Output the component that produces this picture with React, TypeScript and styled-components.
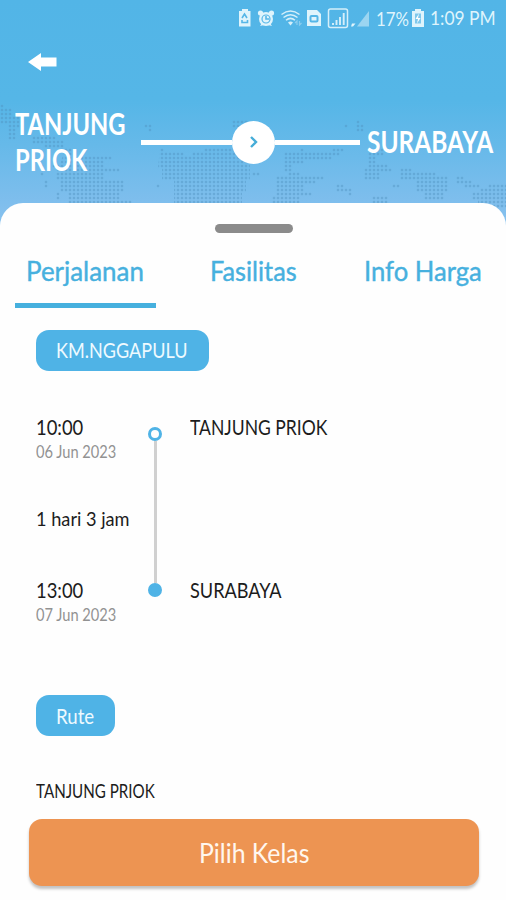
import React from "react";
import styled, { createGlobalStyle } from "styled-components";

const BLUE = "#4fb3e6";

const GlobalStyle = createGlobalStyle`
  * { box-sizing: border-box; }
  body { margin: 0; background: #fefefe; font-family: Lato, "Open Sans", sans-serif; }
  button { font-family: inherit; }
`;

const Screen = styled.main`
  width: 506px;
  height: 900px;
  display: flex;
  flex-direction: column;
  overflow: hidden;
  background: #fefefe;
`;

/* Condensed label: the box keeps the final width, the glyphs are narrowed inside it. */
const LabelBox = styled.span<{ $w: number; $h: number }>`
  display: block;
  flex: none;
  width: ${(p) => p.$w}px;
  height: ${(p) => p.$h}px;
  text-align: left;
`;

const LabelText = styled.span<{
  $size: number;
  $lead: number;
  $scale: number;
  $color: string;
  $weight: number;
  $stroke: number;
}>`
  display: block;
  width: max-content;
  font-size: ${(p) => p.$size}px;
  line-height: ${(p) => p.$lead}px;
  font-weight: ${(p) => p.$weight};
  color: ${(p) => p.$color};
  -webkit-text-stroke: ${(p) => p.$stroke}px ${(p) => p.$color};
  white-space: nowrap;
  transform: scaleX(${(p) => p.$scale});
  transform-origin: 0 50%;
`;

type LabelProps = {
  children: string;
  w: number;
  h: number;
  size: number;
  scale: number;
  lead?: number;
  color?: string;
  weight?: number;
  stroke?: number;
};

function Label({ children, w, h, size, scale, lead = h, color = "#1c1c1c", weight = 400, stroke = 0 }: LabelProps) {
  return (
    <LabelBox $w={w} $h={h}>
      <LabelText $size={size} $lead={lead} $scale={scale} $color={color} $weight={weight} $stroke={stroke}>
        {children}
      </LabelText>
    </LabelBox>
  );
}

const Header = styled.header`
  position: relative;
  flex: none;
  height: 230px;
  background: linear-gradient(#52b5e7 0, #55b6e7 100px, #66b9e9 145px, #7fbeed 203px, #8ac3ef 230px);
`;

const WorldMap = styled.svg`
  position: absolute;
  inset: 0;
`;

const HeaderContent = styled.div`
  position: relative;
  display: flex;
  flex-direction: column;
`;

const StatusBar = styled.div`
  display: flex;
  align-items: center;
  height: 36px;
  padding-left: 238px;
`;

const StatusIcons = styled.svg`
  flex: none;
  margin-right: 7px;
`;

const ClockSlot = styled.div`
  display: flex;
  align-items: center;
  gap: 6px;
  margin-left: 4px;
`;

const BackButton = styled.button`
  display: flex;
  width: 30px;
  height: 20px;
  margin: 16px 0 0 28px;
  padding: 0;
  border: 0;
  background: none;
`;

const RouteBar = styled.div`
  display: flex;
  align-items: center;
  height: 74px;
  margin-top: 33px;
  padding-left: 15px;
`;

const Origin = styled.div`
  display: flex;
  flex-direction: column;
  width: 126px;
`;

const Connector = styled.div`
  display: flex;
  align-items: center;
  width: 219px;
  margin-right: 7px;
`;

const Rule = styled.span<{ $w: number }>`
  width: ${(p) => p.$w}px;
  height: 5px;
  background: #fff;
`;

const Circle = styled.span`
  display: flex;
  align-items: center;
  justify-content: center;
  width: 43px;
  height: 43px;
  border-radius: 50%;
  background: #fff;
`;

const Sheet = styled.section`
  position: relative;
  flex: 1;
  display: flex;
  flex-direction: column;
  margin-top: -27px;
  border-radius: 23px 23px 0 0;
  background: #fefefe;
`;

const Handle = styled.div`
  width: 78px;
  height: 9px;
  margin: 21px 0 0 215px;
  border-radius: 5px;
  background: #8b8b8b;
`;

const Tabs = styled.nav`
  display: flex;
  justify-content: space-between;
  padding: 0 12px 0 14.5px;
  margin-top: 21px;
`;

const Tab = styled.div<{ $active?: boolean }>`
  display: flex;
  justify-content: center;
  width: 141px;
  height: 54px;
  border-bottom: 5px solid ${(p) => (p.$active ? "#46b0de" : "transparent")};
`;

const Chip = styled.div<{ $w: number; $top: number }>`
  display: flex;
  align-items: center;
  width: ${(p) => p.$w}px;
  height: 41px;
  margin: ${(p) => p.$top}px 0 0 36px;
  padding-left: 20px;
  border-radius: 13px;
  background: ${BLUE};
`;

const Journey = styled.div`
  display: grid;
  grid-template-columns: 111px 43px 1fr;
  height: 210px;
  margin: 44px 0 0 36px;
`;

const Times = styled.div`
  display: flex;
  flex-direction: column;
  justify-content: space-between;
`;

const Stop = styled.div`
  display: flex;
  flex-direction: column;
`;

const Track = styled.div`
  display: flex;
  flex-direction: column;
  align-items: center;
  width: 16px;
  height: 170px;
  margin-top: 12px;
`;

const Dot = styled.span<{ $filled?: boolean }>`
  width: 14px;
  height: 14px;
  border: 3px solid ${BLUE};
  border-radius: 50%;
  background: ${(p) => (p.$filled ? BLUE : "#fefefe")};
`;

const TrackLine = styled.span`
  flex: 1;
  width: 3px;
  background: #d0d0d0;
`;

const Ports = styled.div`
  display: flex;
  flex-direction: column;
  justify-content: space-between;
  height: 189px;
`;

const RouteItem = styled.div`
  margin: 43px 0 0 36px;
`;

const SelectButton = styled.button`
  display: flex;
  align-items: center;
  justify-content: center;
  flex: none;
  width: 450px;
  height: 67px;
  margin: 16px 0 0 29px;
  padding: 0;
  border: 0;
  border-radius: 13px;
  background: #ed9452;
  box-shadow: 0 3px 3px rgba(0, 0, 0, 0.24);
`;

const LAND =
  "M0 104h4v4h8v8h12v12h-8v12h-8v-16h-8z M32 136h24v4h8v8h8v4h-12v-4h-16v-4h-12z" +
  "M40 164h4v16h4v8h-4v-12h-4z M56 192h4v8h-4z" +
  "M64 152h8v8h8v-4h32v4h-8v8h16v4h-16v8h20v12h-4v8h12v8h-64v-16h-8v-12h-4v-12h-4v-4h8z" +
  "M144 124h8v8h-4v-4h-4z M156 184h4v4h-4z M160 148h4v4h20v4h8v-4h12v-4h46v32h-4v12h-4v16h-68v-28h-12v-12h-4z" +
  "M232 120h16v8h-16z M252 172h8v4h-8z" +
  "M284 160v-8h16v-4h4v4h28v-4h12v4h-4v4h-8v4h-28v4h-12v8h-8z" +
  "M276 176h12v-4h12v4h24v4h-8v4h-12v8h8v4h-12v8h-28v-8h4z" +
  "M336 184h8v4h8v8h-4v-4h-12z M344 124h4v4h-4z M356 120h4v4h4v8h-8z" +
  "M368 148h16v8h-8v8h12v4h4v4h-12v8h-16v-12h4z M372 196h16v8h-16z M392 184h8v4h-8z" +
  "M400 168h12v4h24v4h12v16h-4v8h-20v-8h-8v-12h-16z M456 176h8v4h8v4h8v4h-16v-4h-8z M472 192h8v-4h8v-4h18v24h-28v-8h-6z";

export default function App() {
  return (
    <>
      <GlobalStyle />
      <Screen>
        <Header>
          <WorldMap width="506" height="230" viewBox="0 0 506 230">
            <defs>
              <pattern id="dots" width="4" height="4" patternUnits="userSpaceOnUse">
                <path d="M2 0v4M0 2h4" stroke="#4a8fbd" strokeOpacity="0.15" strokeWidth="1" />
                <circle cx="2" cy="2" r="1" fill="#4a8fbd" fillOpacity="0.42" />
              </pattern>
            </defs>
            <path d={LAND} fill="url(#dots)" />
          </WorldMap>
          <HeaderContent>
            <StatusBar>
              <StatusIcons width="131" height="22" viewBox="238 7 131 22" fill="none">
                <g fill="#dff4fc">
                  <path d="M242 9h6v2h2.500v15.500h-11.500v-15.500h3z" />
                  <circle cx="266" cy="19" r="7" />
                  <circle cx="260.500" cy="13" r="2.600" />
                  <circle cx="271.500" cy="13" r="2.600" />
                  <path d="M260 26l2-3 2 2zM272 26l-2-3-2 2z" />
                  <path d="M307 10h10l4 4v12h-14z" />
                  <path d="M352 23.500h3.500l-2.500 3h-2z" />
                </g>
                <path d="M369 11v15.500h-12z" fill="#9bd5f1" />
                <g stroke="#55b6e7" strokeWidth="1.600">
                  <path d="M242 18l2.500-4 2.500 4M242 20v2.500h5.500V20" />
                  <circle cx="266" cy="19" r="4" strokeWidth="1.200" />
                  <path d="M266 16v3h3" />
                  <rect x="310.500" y="16" width="7" height="5.500" rx="1" strokeWidth="2" />
                </g>
                <g stroke="#d5effa" strokeWidth="1.500">
                  <path d="M281.500 14.500q9-7 18 0M283.500 17.500q7-5.500 14 0M286 20.300q4.500-3.800 9 0" />
                  <path d="M288 22.500q2.500-2 5 0l-2.500 3z" fill="#d5effa" stroke="none" />
                  <path d="M295 23l2-2v4M299.500 21v4l2-2" stroke="#8bcdef" strokeWidth="1.200" />
                  <rect x="328.500" y="9" width="19" height="18.500" rx="2" strokeWidth="1.500" />
                  <path d="M333 25v-2M336.500 25v-5M340 25v-8M343.700 25V13" strokeWidth="1.900" />
                </g>
              </StatusIcons>
              <Label w={32} h={24} size={20} scale={0.84} color="#dff4fc">17%</Label>
              <ClockSlot>
                <svg width="12" height="18" viewBox="0 0 12 18">
                  <path d="M3 0h6v2h3v16H0V2h3z" fill="#dff4fc" />
                  <path d="M3 4.500h6v10H3z" fill="#7fc8ec" />
                  <path d="M7 4.500L3.500 10H6l-1 4.500L8.500 9H6z" fill="#fff" />
                </svg>
                <Label w={66} h={24} lead={22} size={20} scale={0.87} color="#dff4fc">1:09 PM</Label>
              </ClockSlot>
            </StatusBar>
            <BackButton aria-label="Kembali">
              <svg width="30" height="20" viewBox="0 0 30 20">
                <path d="M0 10L13 1v4.500h15.500v9H13V19z" fill="#fff" />
              </svg>
            </BackButton>
            <RouteBar>
              <Origin>
                <Label w={112} h={36} lead={34} size={30} scale={0.79} color="#fff" weight={700}>TANJUNG</Label>
                <Label w={112} h={36} lead={35} size={30} scale={0.79} color="#fff" weight={700}>PRIOK</Label>
              </Origin>
              <Connector>
                <Rule $w={91} />
                <Circle>
                  <svg width="10" height="14" viewBox="0 0 10 14">
                    <path d="M2 2l5 5-5 5" fill="none" stroke="#46add8" strokeWidth="2.400" />
                  </svg>
                </Circle>
                <Rule $w={85} />
              </Connector>
              <Label w={128} h={36} lead={34} size={30} scale={0.815} color="#fff" weight={700}>SURABAYA</Label>
            </RouteBar>
          </HeaderContent>
        </Header>

        <Sheet>
          <Handle />
          <Tabs>
            <Tab $active>
              <Label w={119} h={36} lead={34} size={27} scale={0.96} color="#46b0de" stroke={0.4}>Perjalanan</Label>
            </Tab>
            <Tab>
              <Label w={88} h={36} lead={34} size={27} scale={0.936} color="#46b0de" stroke={0.4}>Fasilitas</Label>
            </Tab>
            <Tab>
              <Label w={120} h={36} lead={34} size={27} scale={0.95} color="#46b0de" stroke={0.4}>Info Harga</Label>
            </Tab>
          </Tabs>

          <Chip $w={172.5} $top={22}>
            <Label w={132} h={28} lead={27} size={21.5} scale={0.84} color="#eefaff">KM.NGGAPULU</Label>
          </Chip>

          <Journey>
            <Times>
              <Stop>
                <Label w={50} h={26} lead={24} size={21.5} scale={0.855}>10:00</Label>
                <Label w={84} h={22} size={17} scale={0.861} color="#929292">06 Jun 2023</Label>
              </Stop>
              <Label w={96} h={24} lead={22} size={19} scale={0.957}>1 hari 3 jam</Label>
              <Stop>
                <Label w={50} h={26} size={21.5} scale={0.855}>13:00</Label>
                <Label w={84} h={22} lead={24} size={17} scale={0.861} color="#929292">07 Jun 2023</Label>
              </Stop>
            </Times>
            <Track>
              <Dot />
              <TrackLine />
              <Dot $filled />
            </Track>
            <Ports>
              <Label w={140} h={26} lead={24} size={21.5} scale={0.815}>TANJUNG PRIOK</Label>
              <Label w={140} h={26} lead={25} size={21.5} scale={0.843}>SURABAYA</Label>
            </Ports>
          </Journey>

          <Chip $w={79} $top={70}>
            <Label w={40} h={28} size={21.5} scale={0.867} color="#eefaff">Rute</Label>
          </Chip>

          <RouteItem>
            <Label w={122} h={24} size={19} scale={0.797}>TANJUNG PRIOK</Label>
          </RouteItem>

          <SelectButton>
            <Label w={111} h={36} size={27} scale={0.92} color="#fff7ef">Pilih Kelas</Label>
          </SelectButton>
        </Sheet>
      </Screen>
    </>
  );
}
